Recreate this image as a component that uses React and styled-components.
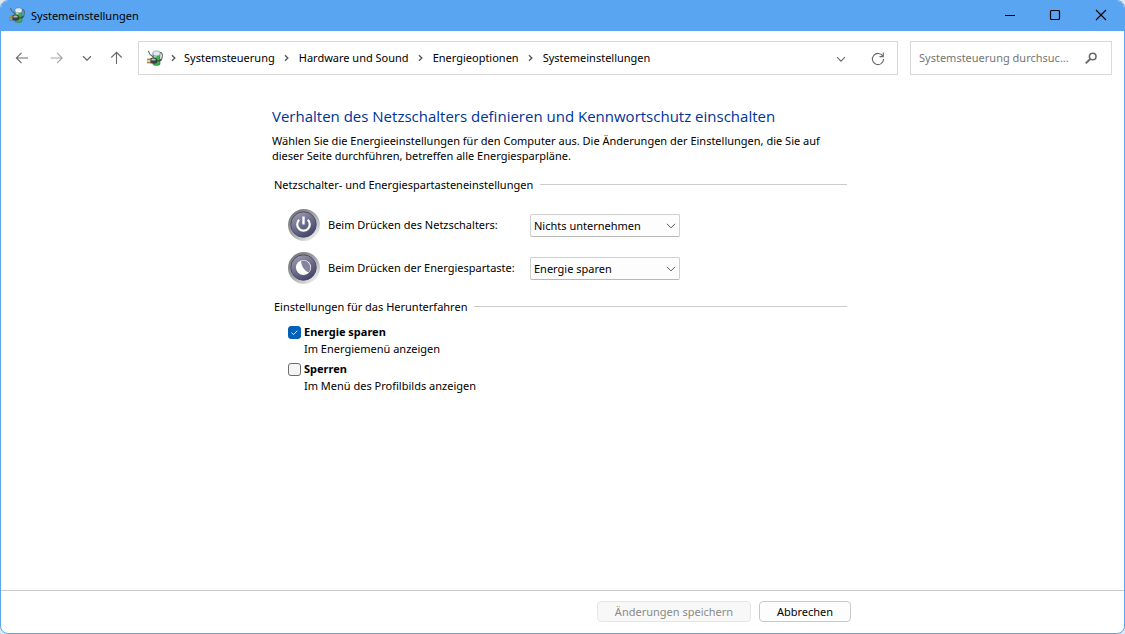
import React, { useState } from "react";
import styled, { createGlobalStyle } from "styled-components";

const Global = createGlobalStyle`
  *, *::before, *::after { box-sizing: border-box; }
  body { margin: 0; background: #dfe6ee; }
  body, button, input, select {
    font-family: "Noto Sans", "Open Sans", sans-serif;
    font-size: 11px;
    line-height: 15px;
    color: #000;
  }
`;

const Window = styled.div`
  display: flex;
  flex-direction: column;
  min-height: 100vh;
  background: #fff;
  border: 1px solid #5aa5f1;
  border-radius: 8px;
  overflow: hidden;
`;

const TitleBar = styled.header`
  display: flex;
  align-items: center;
  height: 30px;
  padding: 0 0 2px 8px;
  gap: 6px;
  background: #5aa5f1;
`;

const WindowTitle = styled.span`
  flex: 1;
`;

const CaptionButton = styled.button`
  display: grid;
  place-items: center;
  width: 46px;
  height: 28px;
  padding: 0;
  border: 0;
  background: none;
`;

const CaptionButtons = styled.div`
  display: flex;
`;

const Toolbar = styled.div`
  display: flex;
  align-items: center;
  gap: 12px;
  padding: 10px 12px 0 8px;
`;

const NavButtons = styled.div`
  display: flex;
  gap: 8px;
  margin-right: -1px;
`;

const IconButton = styled.button`
  display: grid;
  place-items: center;
  width: ${(p) => p.$width || 26}px;
  height: 26px;
  padding: 0;
  border: 0;
  background: none;
  color: ${(p) => (p.$faded ? "#a3a3a3" : "#6a6a6a")};
`;

const AddressBar = styled.div`
  display: flex;
  align-items: center;
  flex: 1;
  min-width: 0;
  height: 34px;
  padding: 0 6px 0 8px;
  border: 1px solid #d9d9d9;
`;

const Crumbs = styled.nav`
  display: flex;
  align-items: center;
  flex: 1;
  padding-bottom: 2px;
  white-space: nowrap;
`;

const Crumb = styled.a`
  color: #000;
  text-decoration: none;
`;

const Separator = styled.span`
  display: grid;
  place-items: center;
  width: ${(p) => (p.$first ? 21 : 24)}px;
  padding-top: 2px;
  color: #5a5a5a;
`;

const SearchBox = styled.label`
  display: flex;
  align-items: center;
  width: 202px;
  height: 34px;
  padding: 0 12px 0 8px;
  border: 1px solid #d9d9d9;
  color: #6a6a6a;
`;

const SearchInput = styled.input`
  flex: 1;
  min-width: 0;
  padding: 0 0 2px;
  border: 0;
  outline: 0;
  background: none;
  &::placeholder { color: #757575; opacity: 1; }
`;

const Column = styled.div`
  width: 100%;
  max-width: 581px;
  margin: 0 auto;
`;

const Content = styled.main`
  flex: 1;
  padding-top: 31px;
`;

const Page = styled(Column)`
  padding-right: 6px;
`;

const Heading = styled.h1`
  margin: 0;
  font-family: "Open Sans", "Noto Sans", sans-serif;
  font-size: 15px;
  line-height: 20px;
  font-weight: 400;
  color: #003399;
`;

const Intro = styled.p`
  margin: 7px 0 0;
`;

const Group = styled.fieldset`
  margin: ${(p) => p.$top}px 0 0;
  padding: 0;
  border: 0;
  min-width: 0;
`;

const GroupTitle = styled.legend`
  display: flex;
  align-items: center;
  gap: 7px;
  width: 100%;
  padding: 0 0 0 2px;
  &::after {
    content: "";
    flex: 1;
    height: 1px;
    background: #cbcbcb;
  }
`;

const SettingRows = styled.div`
  display: grid;
  gap: 11px;
  padding: 16px 0 0 15px;
`;

const SettingRow = styled.div`
  display: grid;
  grid-template-columns: 34px 195px 150px;
  column-gap: 7px;
  align-items: center;
  height: 32px;
`;

const SettingLabel = styled.label`
  padding-bottom: 2px;
  white-space: nowrap;
`;

const SelectWrap = styled.div`
  position: relative;
  & svg {
    position: absolute;
    right: 4px;
    top: 7px;
    pointer-events: none;
    color: #555;
  }
`;

const Select = styled.select`
  display: block;
  appearance: none;
  width: 100%;
  height: 23px;
  padding: 0 18px 0 3px;
  border: 1px solid #d0d0d0;
  border-bottom-color: #b8b8b8;
  border-radius: 2px;
  background: #fdfdfd;
`;

const CheckList = styled.div`
  display: grid;
  gap: 5px;
  padding: 10px 0 0 16px;
`;

const CheckItem = styled.label`
  display: grid;
  grid-template-columns: 13px 1fr;
  column-gap: 3px;
  row-gap: 2px;
  align-items: center;
`;

const Checkbox = styled.input`
  appearance: none;
  width: 13px;
  height: 13px;
  margin: 1px 0 0;
  border: 1px solid #6b6b6b;
  border-radius: 3px;
  background: #f5f5f5;
  &:checked {
    border-color: #005fb8;
    background: #005fb8
      url("data:image/svg+xml,%3Csvg xmlns='http://www.w3.org/2000/svg' viewBox='0 0 11 11'%3E%3Cpath d='M2.5 5.7 4.5 7.6 8.5 3.6' fill='none' stroke='white' stroke-width='.9'/%3E%3C/svg%3E")
      center / 11px 11px no-repeat;
  }
`;

const CheckTitle = styled.strong`
  font-weight: 700;
`;

const CheckNote = styled.span`
  grid-column: 2;
`;

const Footer = styled.footer`
  padding: 10px 0 11px;
  border-top: 1px solid #cbcbcb;
`;

const Actions = styled(Column)`
  display: flex;
  justify-content: flex-end;
  gap: 8px;
  padding-right: 2px;
`;

const ActionButton = styled.button`
  width: ${(p) => p.$width}px;
  height: 21px;
  padding: 0;
  border: 1px solid #c8c8c8;
  border-radius: 4px;
  background: #fdfdfd;
  &:disabled {
    border-color: #e6e6e6;
    background: #f8f8f8;
    color: #8a8a8a;
  }
`;

const PlugIcon = () => (
  <svg width="16" height="16" viewBox="0 0 16 16" aria-hidden="true">
    <path d="M12.500 2.500c2.600-.4 3 1.500 2.700 4.500-.2 2-.8 3.300-2 4" fill="none" stroke="#55645c" strokeWidth="1.100" />
    <path d="M6 3h7v11.500c-1.600 1.300-5.400 1.300-7 0z" fill="#37b54a" stroke="#2a6a3c" strokeWidth=".5" />
    <path d="M7 4.500h2.500v3H7z" fill="#a3ecab" />
    <path d="M6 2c1-1.500 6-1.500 7 0v3c-2 1.200-5 1.200-7 0z" fill="#dfe9ef" stroke="#6f7f8a" strokeWidth=".6" />
    <path d="M1.200 1c1 .6.900 3 2.300 3.800 1.200.6 2 1 2.300 2.400" fill="none" stroke="#5b6167" strokeWidth="1.100" />
    <path d="M0 9.500h4M0 12.500h4" stroke="#6b5212" strokeWidth="1.700" />
    <path d="M0 9.200h4M0 12.200h4" stroke="#e5b445" strokeWidth=".9" />
    <path d="M3.500 8.300 6 7.500c2.300-.4 4.300 1 4.600 2.900.1 2-1.300 3.300-3.500 3.300l-3.600-.5z" fill="#3c4043" />
    <path d="M4.500 9c1.500-.8 3.500-.5 4.500.9-1.300.8-3 .8-4.500.5z" fill="#b3b8bc" />
    <path d="M10.300 11c2 .3 2.600-.7 3.700-1.500" fill="none" stroke="#3b4540" strokeWidth="1.100" />
  </svg>
);

const Orb = ({ id, children }) => (
  <svg width="34" height="34" viewBox="0 0 34 34" aria-hidden="true">
    <defs>
      <linearGradient id={`${id}-rim`} x1=".15" y1=".1" x2=".85" y2=".9">
        <stop offset="0" stopColor="#77777c" />
        <stop offset=".5" stopColor="#a5a5aa" />
        <stop offset="1" stopColor="#ededf1" />
      </linearGradient>
      <linearGradient id={`${id}-face`} x1=".2" y1="0" x2=".8" y2="1">
        <stop offset="0" stopColor="#9c9cb2" />
        <stop offset=".5" stopColor="#6c6c8a" />
        <stop offset="1" stopColor="#3f3f62" />
      </linearGradient>
    </defs>
    <circle cx="17" cy="17" r="16" fill={`url(#${id}-rim)`} />
    <circle cx="16.500" cy="16.500" r="12.700" fill={`url(#${id}-face)`} stroke="#4c4c68" strokeWidth="1" />
    {children}
  </svg>
);

const PowerOrb = () => (
  <Orb id="power">
    <path d="M12.200 11.700a6.300 6.300 0 1 0 8.600 0" fill="none" stroke="#fff" strokeWidth="2.200" />
    <path d="M16.500 8.500v8" stroke="#fff" strokeWidth="2.400" />
  </Orb>
);

const SleepOrb = () => (
  <Orb id="sleep">
    <circle cx="16.500" cy="16.500" r="7.600" fill="#fff" />
    <path d="M14.200 9.800a7.200 7.200 0 0 1 7.400 11.600c-3.800-1.200-7.800-6.500-7.400-11.600z" fill="#85859f" />
  </Orb>
);

const Line = ({ d, size = 16, width = 1.1 }) => (
  <svg width={size} height={size} viewBox="0 0 16 16" fill="none" stroke="currentColor" strokeWidth={width} aria-hidden="true">
    <path d={d} />
  </svg>
);

const CHEVRON_DOWN = "M4 6.200 8 10.200 12 6.200";
const CHEVRON_RIGHT = "M6 5.200 8.800 8 6 10.800";

const trail = ["Systemsteuerung", "Hardware und Sound", "Energieoptionen", "Systemeinstellungen"];
const choices = ["Nichts unternehmen", "Energie sparen", "Ruhezustand", "Herunterfahren"];

const buttonSettings = [
  { id: "power-button", label: "Beim Drücken des Netzschalters:", value: "Nichts unternehmen", Icon: PowerOrb },
  { id: "sleep-button", label: "Beim Drücken der Energiespartaste:", value: "Energie sparen", Icon: SleepOrb },
];

const shutdownSettings = [
  { title: "Energie sparen", note: "Im Energiemenü anzeigen", checked: true },
  { title: "Sperren", note: "Im Menü des Profilbilds anzeigen", checked: false },
];

function ButtonSetting({ id, label, value, Icon }) {
  const [choice, setChoice] = useState(value);
  return (
    <SettingRow>
      <Icon />
      <SettingLabel htmlFor={id}>{label}</SettingLabel>
      <SelectWrap>
        <Select id={id} value={choice} onChange={(e) => setChoice(e.target.value)}>
          {choices.map((c) => <option key={c}>{c}</option>)}
        </Select>
        <Line d="M1.500 4.500 8 11 14.500 4.500" size={10} width={1.600} />
      </SelectWrap>
    </SettingRow>
  );
}

export default function App() {
  return (
    <>
      <Global />
      <Window>
        <TitleBar>
          <PlugIcon />
          <WindowTitle>Systemeinstellungen</WindowTitle>
          <CaptionButtons>
            <CaptionButton aria-label="Minimieren"><Line d="M4 8.500h10" width={1} /></CaptionButton>
            <CaptionButton aria-label="Maximieren"><Line d="M4.500 3.500h7q1 0 1 1v7q0 1-1 1h-7q-1 0-1-1v-7q0-1 1-1z" width={1.200} /></CaptionButton>
            <CaptionButton aria-label="Schließen"><Line d="M3 3 13 13M13 3 3 13" /></CaptionButton>
          </CaptionButtons>
        </TitleBar>

        <Toolbar>
          <NavButtons>
            <IconButton aria-label="Zurück"><Line d="M14 8H2.500M7.500 2.800 2.300 8 7.500 13.200" /></IconButton>
            <IconButton $faded aria-label="Vorwärts"><Line d="M2.500 8h11.500M9 2.800 14.200 8 9 13.200" /></IconButton>
            <IconButton $width={20} aria-label="Zuletzt besucht"><Line d={CHEVRON_DOWN} width={1.300} /></IconButton>
            <IconButton $width={22} aria-label="Nach oben"><Line d="M8.500 14V2.500M3.300 7.500 8.500 2.300 13.700 7.500" /></IconButton>
          </NavButtons>
          <AddressBar>
            <PlugIcon />
            <Crumbs aria-label="Pfad">
              {trail.map((name, i) => (
                <React.Fragment key={name}>
                  <Separator $first={i === 0}><Line d={CHEVRON_RIGHT} width={1.400} /></Separator>
                  <Crumb href="#">{name}</Crumb>
                </React.Fragment>
              ))}
            </Crumbs>
            <IconButton $width={48} aria-label="Vorherige Orte"><Line d="M4 7.200 8 11.200 12 7.200" /></IconButton>
            <IconButton aria-label="Aktualisieren"><Line d="M13 6.500A5.600 5.600 0 1 0 13.600 9M13.300 2.500V6.600H9.500" /></IconButton>
          </AddressBar>
          <SearchBox>
            <SearchInput type="search" aria-label="Systemsteuerung durchsuchen" placeholder="Systemsteuerung durchsuc..." />
            <svg width="16" height="16" viewBox="0 0 16 16" fill="none" stroke="currentColor" aria-hidden="true">
              <circle cx="9.700" cy="6.500" r="3.300" strokeWidth="1.600" />
              <path d="M7.200 9 2.800 13.400" strokeWidth="1.900" />
            </svg>
          </SearchBox>
        </Toolbar>

        <Content>
          <Page>
            <Heading>Verhalten des Netzschalters definieren und Kennwortschutz einschalten</Heading>
            <Intro>
              Wählen Sie die Energieeinstellungen für den Computer aus. Die Änderungen der Einstellungen, die Sie auf
              dieser Seite durchführen, betreffen alle Energiesparpläne.
            </Intro>
            <Group $top={14}>
              <GroupTitle>Netzschalter- und Energiespartasteneinstellungen</GroupTitle>
              <SettingRows>
                {buttonSettings.map((s) => <ButtonSetting key={s.id} {...s} />)}
              </SettingRows>
            </Group>
            <Group $top={16}>
              <GroupTitle>Einstellungen für das Herunterfahren</GroupTitle>
              <CheckList>
                {shutdownSettings.map((s) => (
                  <CheckItem key={s.title}>
                    <Checkbox type="checkbox" defaultChecked={s.checked} />
                    <CheckTitle>{s.title}</CheckTitle>
                    <CheckNote>{s.note}</CheckNote>
                  </CheckItem>
                ))}
              </CheckList>
            </Group>
          </Page>
        </Content>

        <Footer>
          <Actions>
            <ActionButton $width={154} disabled>Änderungen speichern</ActionButton>
            <ActionButton $width={92}>Abbrechen</ActionButton>
          </Actions>
        </Footer>
      </Window>
    </>
  );
}
